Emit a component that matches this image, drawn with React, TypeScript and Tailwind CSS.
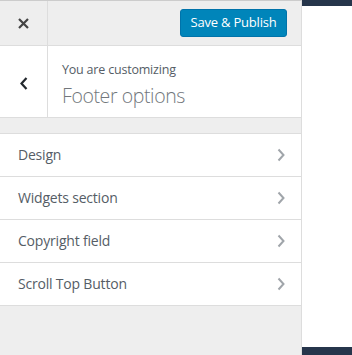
import React from "react";

const items = ["Design", "Widgets section", "Copyright field", "Scroll Top Button"];

function Chevron({ className }: { className?: string }) {
  return (
    <svg width="8" height="14" viewBox="0 0 8 14" className={className} fill="none">
      <path d="M1.5 1.5 L6.5 7 L1.5 12.5" stroke="currentColor" strokeWidth="2" />
    </svg>
  );
}

export default function App() {
  return (
    <div
      className="flex w-[352px] h-[355px] overflow-hidden bg-white"
      style={{ fontFamily: '"Open Sans", "Noto Sans", sans-serif' }}
    >
      <div className="w-[302px] shrink-0 flex flex-col bg-[#eeeeee] border-r border-[#dddddd] border-t border-t-[#cccccc]">
        <div className="flex h-[45px] items-center border-b border-[#dddddd]">
          <div className="w-[48px] h-full flex items-center justify-center border-r border-[#dddddd]">
            <svg width="11" height="11" viewBox="0 0 11 11">
              <path d="M1 1 L10 10 M10 1 L1 10" stroke="#444" strokeWidth="2.2" />
            </svg>
          </div>
          <div className="flex-1 flex justify-end pr-[14px]">
            <button className="h-[28px] w-[107px] rounded-[3px] bg-[#0085ba] border border-[#0073aa] text-white text-[13px] tracking-[-0.2px] font-medium">
              Save &amp; Publish
            </button>
          </div>
        </div>
        <div className="flex h-[72px] bg-white border-b border-[#dddddd]">
          <div className="w-[48px] flex items-center justify-center border-r border-[#dddddd] pt-[4px]">
            <svg width="8" height="13" viewBox="0 0 8 13">
              <path d="M6.5 1 L1.5 6.5 L6.5 12" stroke="#23282d" strokeWidth="2.2" fill="none" />
            </svg>
          </div>
          <div className="pl-[14px] pt-[15px] text-[#555d66]">
            <div className="text-[12.5px] leading-[18px] tracking-[-0.2px]">You are customizing</div>
            <div className="text-[19.5px] leading-[26px] font-light text-[#72777c] tracking-[-0.4px] mt-[4px]">Footer options</div>
          </div>
        </div>
        <div className="mt-[15px] border-t border-[#dddddd]">
          {items.map((t) => (
            <div
              key={t}
              className="h-[43px] bg-white border-b border-[#dddddd] flex items-center justify-between pl-[18px] pr-[16px]"
            >
              <span className="text-[14px] text-[#555d66] tracking-[-0.2px] -mt-[1px]">{t}</span>
              <Chevron className="text-[#a0a5aa]" />
            </div>
          ))}
        </div>
      </div>
      <div className="flex-1 flex flex-col">
        <div className="h-[6px] bg-[#26354b]" />
        <div className="flex-1 bg-white" />
        <div className="h-[8px] bg-[#26354b]" />
      </div>
    </div>
  );
}
